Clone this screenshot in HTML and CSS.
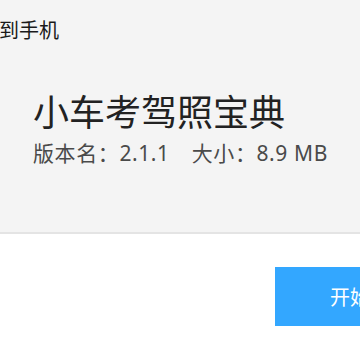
FILE: index.html
```html
<!DOCTYPE html>
<html>
<head>
<meta charset="utf-8">
<link rel="stylesheet" href="styles.css">
</head>
<body>
<div class="page">
  <header class="top">
    <div class="send">到手机</div>
    <div class="info">
      <h1 class="title">小车考驾照宝典</h1>
      <p class="meta"><span>版本名：2.1.1</span><span>大小：8.9 MB</span></p>
    </div>
  </header>
  <section class="bottom">
    <button class="start">开始下载</button>
  </section>
</div>
</body>
</html>
```
FILE: styles.css
```css
html, body {
  margin: 0;
  padding: 0;
}
body {
  width: 360px;
  height: 360px;
  overflow: hidden;
  background: #ffffff;
  font-family: "Noto Sans", "Noto Sans CJK SC", sans-serif;
}
.page {
  display: flex;
  flex-direction: column;
  width: 360px;
  height: 360px;
}
.top {
  height: 232px;
  background: #f4f4f4;
  border-bottom: 2px solid #e4e4e4;
  box-sizing: content-box;
  display: flex;
  flex-direction: column;
}
.send {
  margin: 19px 0 0 -1px;
  font-size: 20px;
  line-height: 24px;
  color: #1a1a1a;
}
.info {
  padding: 0 0 0 33px;
  margin-top: 48px;
}
.title {
  margin: 0;
  font-weight: normal;
  font-size: 36px;
  line-height: 44px;
  color: #222222;
}
.meta {
  margin: 5px 0 0 0;
  font-size: 21px;
  line-height: 26px;
  color: #4a4a4a;
  display: flex;
  gap: 22px;
  letter-spacing: 0.6px;
}
.bottom {
  flex: 1;
  display: flex;
  justify-content: flex-end;
  padding-top: 33px;
  overflow: hidden;
}
.start {
  flex: none;
  width: 160px;
  height: 59px;
  margin-right: -75px;
  margin-left: 275px;
  border: none;
  background: #33a7ff;
  color: #ffffff;
  font-family: "Noto Sans CJK SC", sans-serif;
  font-size: 20px;
  text-align: left;
  padding: 0 0 0 55px;
}
```
